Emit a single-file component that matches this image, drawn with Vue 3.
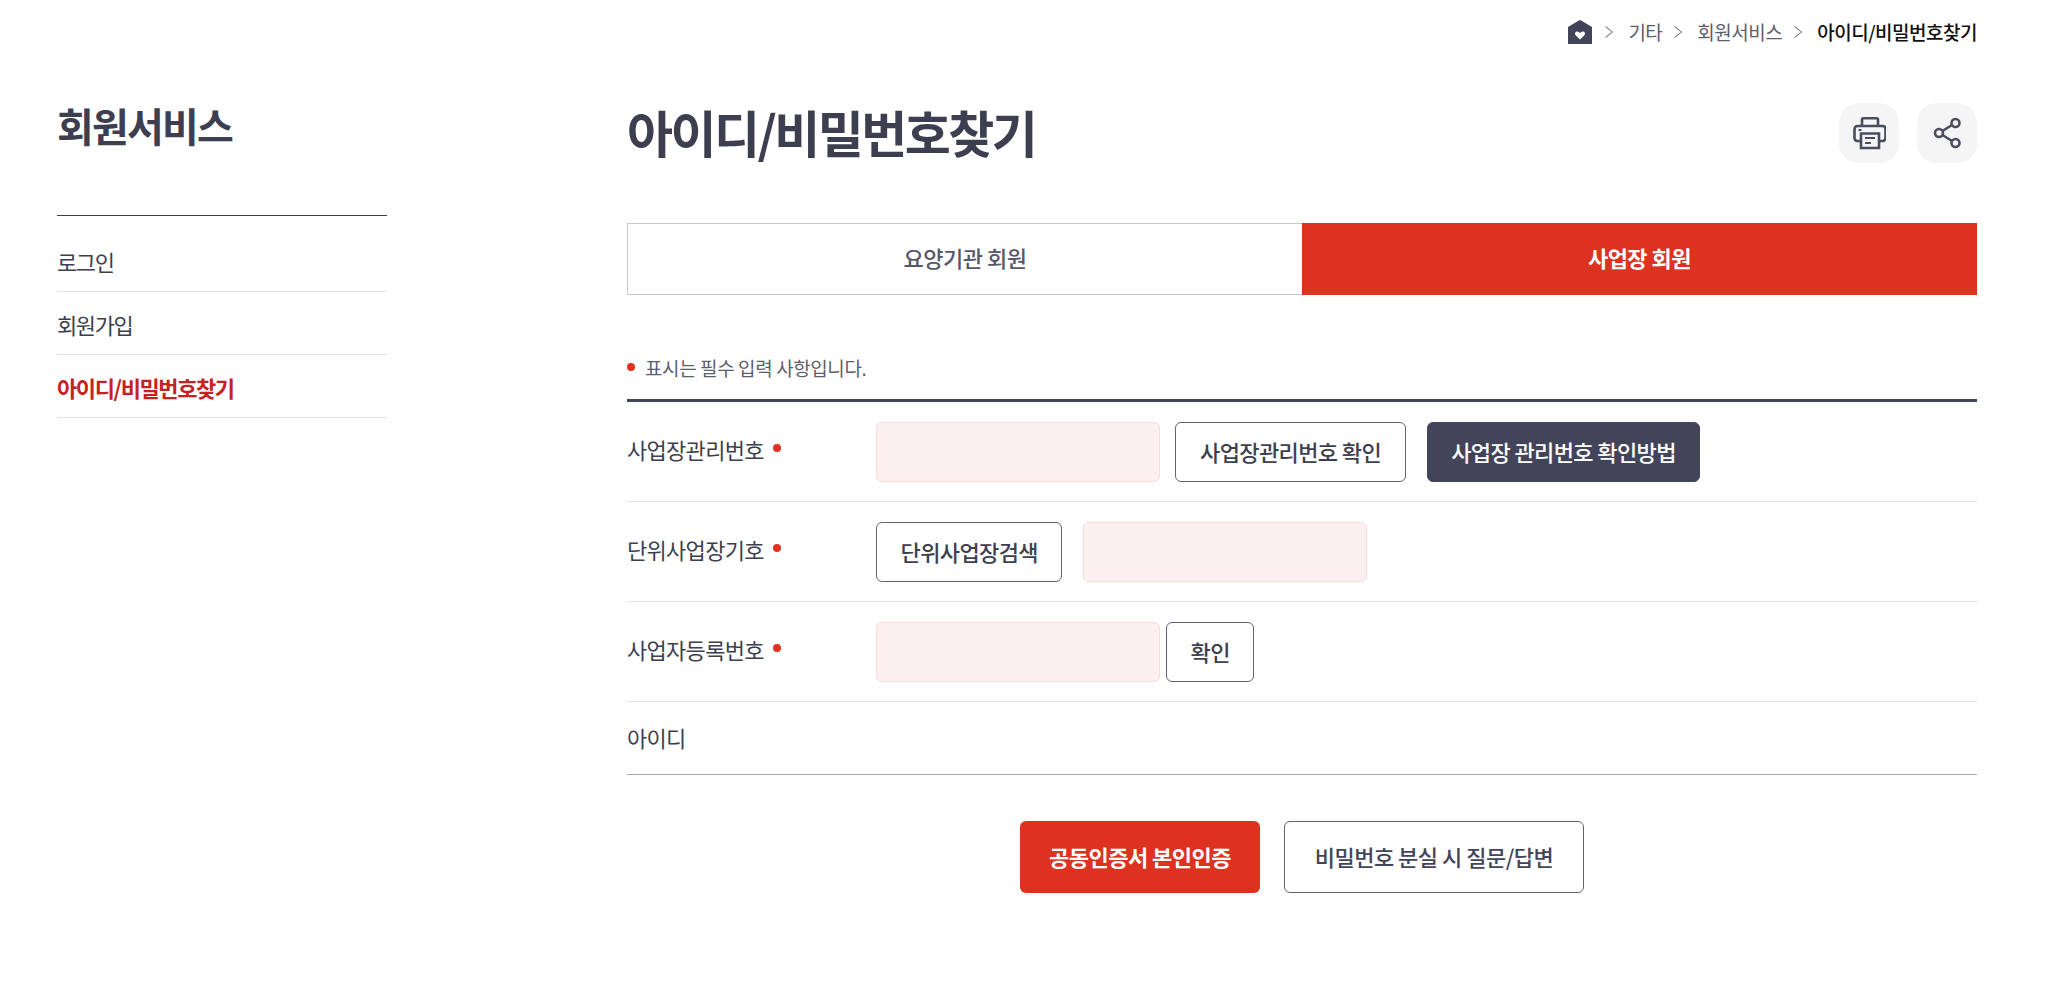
<script setup>
const items = [
  { label: '로그인' },
  { label: '회원가입' },
  { label: '아이디/비밀번호찾기', active: true },
]
</script>

<template>
  <div class="page">
    <nav class="crumbs">
      <svg class="home" viewBox="0 0 24 24" width="24" height="24">
        <path fill="#42455a" d="M10.800.6c.8-.5 1.600-.5 2.400 0L24 7v17H0V7z" />
        <path fill="#fff" d="M12 19.500 7.600 15.200c-1.500-1.700.1-4.100 2.300-3.500.9.200 1.600.8 2.100 1.400.5-.6 1.200-1.200 2.100-1.400 2.200-.6 3.800 1.800 2.300 3.500z" />
      </svg>
      <svg class="sep" viewBox="0 0 8 12" width="8" height="12"><path d="M.5.500l7 5.500-7 5.500" fill="none" stroke="#8a8a8a" stroke-width="1.100" /></svg>
      <span>기타</span>
      <svg class="sep" viewBox="0 0 8 12" width="8" height="12"><path d="M.5.500l7 5.500-7 5.500" fill="none" stroke="#8a8a8a" stroke-width="1.100" /></svg>
      <span>회원서비스</span>
      <svg class="sep" viewBox="0 0 8 12" width="8" height="12"><path d="M.5.500l7 5.500-7 5.500" fill="none" stroke="#8a8a8a" stroke-width="1.100" /></svg>
      <span class="current">아이디/비밀번호찾기</span>
    </nav>

    <div class="body">
      <aside class="side">
        <h2>회원서비스</h2>
        <ul>
          <li v-for="item in items" :key="item.label" :class="{ active: item.active }">{{ item.label }}</li>
        </ul>
      </aside>

      <main class="main">
        <header class="head">
          <h1>아이디/비밀번호찾기</h1>
          <div class="tools">
            <button class="tool" aria-label="인쇄">
              <svg viewBox="-1 0 34 34" width="34" height="34" fill="none" stroke="#4a4d62" stroke-width="2.6">
                <path d="M9 10V3.500c0-.8.6-1.300 1.300-1.300h13.400c.7 0 1.300.5 1.300 1.300V10" />
                <path d="M8 25H4.500C3 25 1.500 23.800 1.500 22V13c0-1.700 1.300-3 3-3h25c1.700 0 3 1.300 3 3v9c0 1.800-1.500 3-3 3H26" />
                <path d="M8 17.500h18V32H8z" />
                <path d="M12 22h10M12 27h6" stroke-width="2" />
                <path d="M5.500 14h3" stroke-width="2" />
              </svg>
            </button>
            <button class="tool" aria-label="공유">
              <svg viewBox="-1 0 30 32" width="30" height="32" fill="none" stroke="#4a4d62" stroke-width="2.6">
                <circle cx="22.500" cy="6" r="4" />
                <circle cx="22.500" cy="26" r="4" />
                <circle cx="6" cy="16" r="4" />
                <path d="M9.500 14 19 8M9.500 18 19 24" />
              </svg>
            </button>
          </div>
        </header>

        <div class="tabs">
          <div class="tab">요양기관 회원</div>
          <div class="tab on">사업장 회원</div>
        </div>

        <p class="note"><i class="dot"></i>표시는 필수 입력 사항입니다.</p>

        <div class="form">
          <div class="row">
            <div class="label">사업장관리번호<i class="dot"></i></div>
            <div class="fields">
              <span class="input"></span>
              <button class="btn first">사업장관리번호 확인</button>
              <button class="btn dark">사업장 관리번호 확인방법</button>
            </div>
          </div>
          <div class="row">
            <div class="label">단위사업장기호<i class="dot"></i></div>
            <div class="fields">
              <button class="btn">단위사업장검색</button>
              <span class="input after"></span>
            </div>
          </div>
          <div class="row">
            <div class="label">사업자등록번호<i class="dot"></i></div>
            <div class="fields">
              <span class="input"></span>
              <button class="btn tight">확인</button>
            </div>
          </div>
          <div class="row short">
            <div class="label">아이디</div>
          </div>
        </div>

        <div class="actions">
          <button class="act red">공동인증서 본인인증</button>
          <button class="act line">비밀번호 분실 시 질문/답변</button>
        </div>
      </main>
    </div>
  </div>
</template>

<style>
html, body { margin: 0; background: #fff; }
</style>

<style scoped>
.page {
  width: 2056px;
  height: 984px;
  overflow: hidden;
  font-family: "Noto Sans CJK KR", "Noto Sans", sans-serif;
  color: #3d3f50;
  box-sizing: border-box;
  padding: 0 79px 0 57px;
}
button { font-family: inherit; cursor: pointer; }
.crumbs {
  height: 64px;
  display: flex;
  align-items: center;
  justify-content: flex-end;
  font-size: 19px;
  letter-spacing: -0.5px;
  color: #5c5e6c;
}
.crumbs span { line-height: 24px; }
.home { margin-right: 13px; }
.sep { margin-right: 15px; }
.crumbs span + .sep { margin-left: 12px; }
.crumbs .current { color: #111; font-weight: 500; }
.body { display: flex; }
.side { width: 330px; margin-right: 240px; flex: none; }
.side h2 {
  margin: 36px 0 0;
  height: 50px;
  line-height: 50px;
  font-size: 40px;
  font-weight: 700;
  letter-spacing: -1.800px;
  color: #3d3f50;
}
.side ul {
  list-style: none;
  margin: 65px 0 0;
  padding: 13px 0 0;
  border-top: 1px solid #3d3f50;
}
.side li {
  height: 62px;
  line-height: 64px;
  font-size: 22px;
  letter-spacing: -1.400px;
  border-bottom: 1px solid #e3e3e6;
}
.side li.active { color: #c72222; font-weight: 700; }
.main { flex: 1; min-width: 0; }
.head {
  height: 60px;
  margin-top: 39px;
  display: flex;
  justify-content: space-between;
  align-items: center;
}
.head h1 {
  margin: 0;
  padding-bottom: 5px;
  font-size: 50px;
  font-weight: 700;
  letter-spacing: -2.500px;
  color: #3d3f50;
}
.tools { display: flex; gap: 18px; }
.tool {
  width: 60px;
  height: 60px;
  border: 0;
  padding: 0;
  border-radius: 20px;
  background: #f5f5f5;
  display: flex;
  align-items: center;
  justify-content: center;
}
.tabs { display: flex; margin-top: 60px; height: 72px; }
.tab {
  width: 675px;
  flex: none;
  box-sizing: border-box;
  padding-bottom: 5px;
  display: flex;
  align-items: center;
  justify-content: center;
  border: 1px solid #c9c9cf;
  border-right: 0;
  font-size: 22px;
  font-weight: 500;
  letter-spacing: -0.5px;
  color: #55576a;
}
.tab.on {
  flex: 1;
  border: 0;
  background: #dc321f;
  color: #fff;
  font-weight: 700;
}
.note {
  margin: 57px 0 0;
  height: 32px;
  line-height: 32px;
  font-size: 19px;
  letter-spacing: -0.4px;
  color: #5c5e6c;
  display: flex;
  align-items: center;
}
.dot {
  width: 8px;
  height: 8px;
  border-radius: 50%;
  background: #e1321f;
  flex: none;
  display: inline-block;
}
.note .dot { margin-right: 10px; margin-top: -2px; }
.form {
  margin-top: 15px;
  border-top: 3px solid #42455a;
  border-bottom: 1px solid #a8a9b2;
}
.row {
  height: 99px;
  display: flex;
  align-items: center;
  border-bottom: 1px solid #e3e3e6;
}
.row.short { height: 72px; border-bottom: 0; }
.label {
  width: 249px;
  flex: none;
  font-size: 22px;
  letter-spacing: -0.7px;
  color: #3d3f50;
  display: flex;
  align-items: center;
  margin-top: -5px;
}
.label .dot { margin-left: 9px; margin-top: -2px; }
.row.short .label { margin-top: -3px; }
.fields { display: flex; align-items: center; }
.input {
  display: block;
  width: 284px;
  height: 60px;
  box-sizing: border-box;
  border: 1px solid #fadad5;
  border-radius: 6px;
  background: #fcf1f0;
}
.input.after { margin-left: 21px; }
.btn {
  height: 60px;
  padding: 0 23.500px 2px;
  box-sizing: border-box;
  border: 1px solid #5f6273;
  border-radius: 6px;
  background: #fff;
  font-size: 22px;
  font-weight: 500;
  letter-spacing: -0.6px;
  color: #3d3f50;
}
.btn.first { margin-left: 15px; padding: 0 24px 2px; }
.btn.tight { margin-left: 6px; padding: 0 23.500px 2px; }
.btn.dark {
  margin-left: 21px;
  padding: 0 23px 2px;
  background: #42455a;
  border-color: #42455a;
  color: #fff;
}
.actions { display: flex; justify-content: center; gap: 24px; margin-top: 46px; }
.act {
  height: 72px;
  border-radius: 6px;
  padding: 0 0 2px;
  font-size: 22px;
  font-weight: 700;
  letter-spacing: -0.5px;
  box-sizing: border-box;
  white-space: nowrap;
}
.act.red { background: #dc321f; border: 0; color: #fff; width: 240px; }
.act.line { background: #fff; border: 1px solid #5f6273; color: #42455a; font-weight: 500; width: 300px; }
</style>
